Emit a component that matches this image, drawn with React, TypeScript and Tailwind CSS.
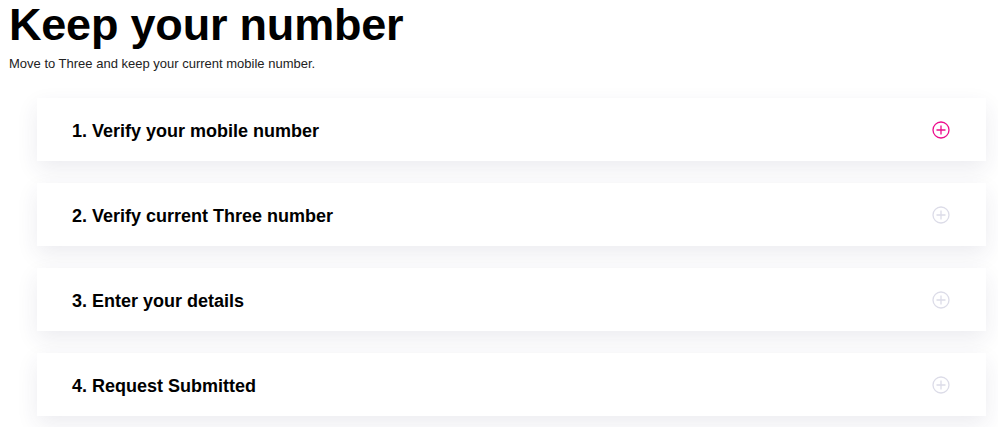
const steps = [
  '1. Verify your mobile number',
  '2. Verify current Three number',
  '3. Enter your details',
  '4. Request Submitted',
];

function PlusCircle({ active }: { active: boolean }) {
  return (
    <svg width="18" height="18" viewBox="0 0 18 18" fill="none" className={active ? 'text-[#ec0c8c]' : 'text-[#dcdce8]'}>
      <circle cx="9" cy="9" r="8" stroke="currentColor" strokeWidth="1.3" />
      <path d="M9 4.5v9M4.5 9h9" stroke="currentColor" strokeWidth="1.3" />
    </svg>
  );
}

export default function App() {
  return (
    <div className="min-h-[427px] bg-white font-['Liberation_Sans',Arial,sans-serif] text-black">
      <div className="pl-[9px]">
        <h1 className="text-[45px] leading-[50px] font-bold tracking-[-0.2px]">Keep your number</h1>
        <p className="mt-[6px] text-[13px] leading-[16px] text-[#222]">
          Move to Three and keep your current mobile number.
        </p>
      </div>
      <div className="ml-[37px] mr-[12px] mt-[26px] flex flex-col gap-[22px]">
        {steps.map((s, i) => (
          <div
            key={s}
            className="flex h-[63px] items-center justify-between bg-white pl-[35px] pr-[36px] shadow-[0_8px_22px_rgba(40,40,90,0.09)]"
          >
            <span className="pt-[3px] text-[18px] font-bold">{s}</span>
            <PlusCircle active={i === 0} />
          </div>
        ))}
      </div>
    </div>
  );
}
